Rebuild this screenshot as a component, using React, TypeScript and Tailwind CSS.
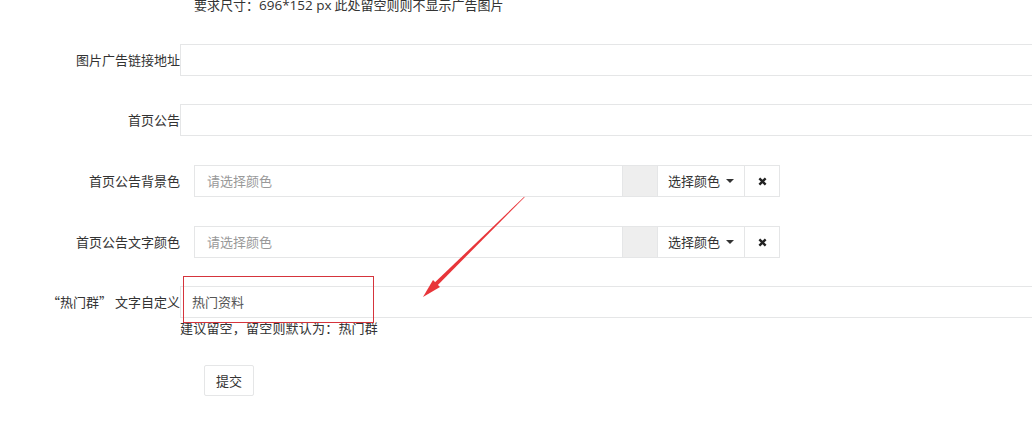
import React from 'react';

const font = { fontFamily: '"Noto Sans CJK SC", "Noto Sans", sans-serif' };

const Label: React.FC<{ text: string }> = ({ text }) => (
  <div className="w-[180px] shrink-0 text-right text-[13px] text-[#333] leading-[32px] whitespace-nowrap">{text}</div>
);

const TextRow: React.FC<{ label: string; value?: string; className?: string }> = ({ label, value, className }) => (
  <div className={`flex items-center h-[32px] ${className ?? ''}`}>
    <Label text={label} />
    <div className="flex-1 h-[32px] border border-[#e5e6e7] bg-white px-[11px] text-[13px] leading-[30px] text-[#555]">
      {value}
    </div>
  </div>
);

const ColorRow: React.FC<{ label: string; className?: string }> = ({ label, className }) => (
  <div className={`flex items-center h-[32px] ${className ?? ''}`}>
    <Label text={label} />
    <div className="ml-[14px] flex h-[32px]">
      <div className="w-[429px] border border-[#e5e6e7] px-[12px] text-[13px] leading-[30px] text-[#999]">请选择颜色</div>
      <div className="w-[34px] bg-[#eeeeee] border-y border-[#e5e6e7]" />
      <div className="w-[88px] border border-[#e5e6e7] flex items-center justify-center gap-[6px] text-[13px] text-[#333]">
        选择颜色
        <span className="w-0 h-0 border-x-[4px] border-x-transparent border-t-[4px] border-t-[#333]" />
      </div>
      <div className="w-[35px] border border-l-0 border-[#e5e6e7] flex items-center justify-center">
        <svg width="9" height="9" viewBox="0 0 10 10">
          <path d="M1.5 1.5 L8.5 8.5 M8.5 1.5 L1.5 8.5" stroke="#222" strokeWidth="2.6" />
        </svg>
      </div>
    </div>
  </div>
);

export default function App() {
  return (
    <div className="relative w-full h-[423px] overflow-hidden bg-white" style={font}>
      <div className="w-[1100px] flex flex-col">
        <div className="-mt-[4px] pl-[194px] text-[13px] leading-[18px] text-[#333] whitespace-nowrap">
          要求尺寸：<span className="font-['Open_Sans'] text-[13.5px]">696*152 px</span> 此处留空则则不显示广告图片
        </div>
        <TextRow label="图片广告链接地址" className="mt-[30px]" />
        <TextRow label="首页公告" className="mt-[28px]" />
        <ColorRow label="首页公告背景色" className="mt-[29px]" />
        <ColorRow label="首页公告文字颜色" className="mt-[29px]" />
        <TextRow label="“热门群” 文字自定义" value="热门资料" className="mt-[28px]" />
        <div className="mt-[1px] pl-[180px] text-[13px] leading-[18px] text-[#333] tracking-[0.2px]">建议留空，留空则默认为：热门群</div>
        <div className="mt-[28px] pl-[204px]">
          <button className="w-[50px] h-[31px] border border-[#e5e6e7] rounded-[2px] bg-white text-[13px] text-[#333]">提交</button>
        </div>
      </div>

      <div className="absolute left-[183px] top-[276px] w-[191px] h-[47px] border border-[#d5343c] pointer-events-none" />

      <svg className="absolute inset-0 pointer-events-none" width="1032" height="423">
        <polygon points="524.2,196.8 524.6,197.2 434.4,288.4 431.6,285.6" fill="#e8353a" />
        <polygon points="423,297 433,280 440,287" fill="#e8353a" />
      </svg>
    </div>
  );
}
